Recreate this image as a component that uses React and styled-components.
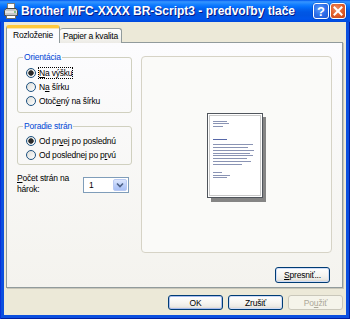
import React from 'react';
import styled, { createGlobalStyle } from 'styled-components';

const GlobalStyle = createGlobalStyle`
  html, body { margin: 0; padding: 0; background: #ECE9D8; }
  body { font-family: "Liberation Sans", Arial, sans-serif; }
  * { box-sizing: border-box; }
`;

const Window = styled.div`
  width: 350px;
  height: 319px;
  display: flex;
  flex-direction: column;
  background: #0B4FDF;
  box-shadow: inset 1px 0 #0831D9, inset -1px 0 #001EA0, inset 0 -1px #001EA0;
  overflow: hidden;
`;

const TitleBar = styled.div`
  height: 22px;
  flex: none;
  display: flex;
  align-items: center;
  padding: 0 4px 0 3px;
  background: linear-gradient(to bottom, #0058EE 0%, #3593FF 8%, #288EFF 13%, #127DFF 22%, #036FFC 32%, #0262EE 42%, #0057E5 55%, #0054E3 70%, #0055EB 86%, #0048DC 100%);
`;

const TitleIcon = styled.svg`
  width: 16px;
  height: 16px;
  flex: none;
`;

const TitleText = styled.div`
  flex: 1;
  margin-left: 2px;
  color: #fff;
  font-weight: bold;
  font-size: 12px;
  line-height: 14px;
  white-space: nowrap;
  text-shadow: 1px 1px #0A1883;
`;

const CaptionButton = styled.div`
  width: 16px;
  height: 16px;
  margin-left: 1px;
  border: 1px solid #fff;
  border-radius: 3px;
  display: flex;
  align-items: center;
  justify-content: center;
  color: #fff;
  font-weight: bold;
  font-size: 13px;
  background: ${p => p.$close
    ? 'radial-gradient(circle at 40% 35%, #F0906A 0%, #E3632F 45%, #C13D14 100%)'
    : 'radial-gradient(circle at 40% 35%, #5D9BFA 0%, #2D6FEA 50%, #1F56D2 100%)'};
  box-shadow: 0 0 0 0.5px rgba(0, 40, 140, 0.5);
`;

const Body = styled.div`
  flex: 1;
  margin: 0 4px 4px 4px;
  background: #ECE9D8;
  display: flex;
  flex-direction: column;
  padding: 3px 3px 5px 2px;
  font-size: 8.5px;
  letter-spacing: -0.2px;
  color: #000;
`;

const TabStrip = styled.div`
  display: flex;
  align-items: flex-end;
  height: 18px;
  margin-bottom: -1px;
  position: relative;
  z-index: 1;
`;

const Tab = styled.div`
  height: ${p => (p.$active ? 18 : 15)}px;
  padding: 0 ${p => (p.$active ? 6 : 3)}px;
  display: flex;
  align-items: center;
  justify-content: center;
  border: 1px solid #919B9C;
  border-bottom: none;
  border-radius: 3px 3px 0 0;
  white-space: nowrap;
  line-height: 10px;
  ${p => p.$active
    ? `
    background: #FCFCFE;
    border-top: 3px solid #FFC83C;
    box-shadow: inset 0 1px 0 #F9E6B3;
    padding-bottom: 1px;
  `
    : `
    background: linear-gradient(#FFFFFF, #F3F2ED 70%, #ECEBE6);
    border-left: none;
  `}
`;

const Panel = styled.div`
  flex: 1;
  border: 1px solid #919B9C;
  box-shadow: 1px 1px 0 #C9C7BA;
  background: linear-gradient(#FCFCFE, #F4F3EE);
  display: flex;
  gap: 9px;
  padding: 9px 9px 0 10px;
`;

const LeftCol = styled.div`
  width: 115px;
  flex: none;
  display: flex;
  flex-direction: column;
`;

const GroupBox = styled.fieldset`
  margin: ${p => p.$mt || 0}px 0 0 0;
  padding: ${p => p.$pt}px 0 ${p => p.$pb}px 0;
  border: 1px solid #D0D0BF;
  border-radius: 3px;
  min-width: 0;
`;

const Legend = styled.legend`
  color: #0046D5;
  margin-left: 5px;
  padding: 0 1px;
  line-height: 10px;
`;

const RadioRow = styled.div`
  height: 14px;
  display: flex;
  align-items: center;
  gap: 3px;
  padding-left: 8px;
  white-space: nowrap;
  line-height: 10px;
`;

const RadioDot = styled.span`
  width: 10px;
  height: 10px;
  flex: none;
  border-radius: 50%;
  border: 1px solid #1C5180;
  background: ${p => (p.$checked
    ? 'radial-gradient(circle, #2A2A2A 0 2.2px, #6A6A6A 2.6px, transparent 3px), linear-gradient(135deg, #DCDCD6, #FFFFFF)'
    : 'linear-gradient(135deg, #DCDCD6, #FFFFFF)')};
`;

const RadioLabel = styled.span`
  ${p => p.$focus && 'outline: 1px dotted #000; outline-offset: 0px;'}
`;

const CountRow = styled.div`
  margin-top: 8px;
  display: flex;
  align-items: flex-start;
`;

const CountLabel = styled.div`
  width: 66px;
  line-height: 11px;
  white-space: nowrap;
`;

const Combo = styled.div`
  width: 46px;
  height: 16px;
  margin-top: 4px;
  border: 1px solid #7F9DB9;
  background: #fff;
  display: flex;
  align-items: center;
  padding: 1px;
`;

const ComboValue = styled.span`
  flex: 1;
  padding-left: 4px;
`;

const ComboArrow = styled.span`
  width: 14px;
  height: 12px;
  border-radius: 2px;
  border: 1px solid #B9CAF3;
  background: linear-gradient(#DCE6FD, #B8CCF9 60%, #A9C0F5);
  display: flex;
  align-items: center;
  justify-content: center;
`;

const RightCol = styled.div`
  width: 191px;
  flex: none;
  display: flex;
  flex-direction: column;
  padding-top: 4px;
`;

const Preview = styled.div`
  height: 197px;
  border: 1px solid #D6D3C6;
  border-radius: 4px;
  background: #FAFAF8;
  display: flex;
  align-items: center;
  justify-content: center;
  padding-top: 7px;
`;

const Button = styled.div`
  width: 55px;
  height: ${p => p.$h || 15}px;
  border: 1px solid ${p => (p.$disabled ? '#C9C7BA' : '#003C74')};
  border-radius: 3px;
  display: flex;
  align-items: center;
  justify-content: center;
  line-height: 10px;
  white-space: nowrap;
  color: ${p => (p.$disabled ? '#ACA899' : '#000')};
  background: ${p => (p.$disabled
    ? '#F5F4EA'
    : 'linear-gradient(#FFFFFF, #F6F5F1 50%, #ECEBE6 80%, #D6D0C5)')};
  box-shadow: ${p => (p.$default
    ? 'inset 0 0 0 1px #A8BDEE'
    : p.$disabled ? 'none' : 'inset 0 0 0 1px #CFDCF7')};
`;

const SideButton = styled(Button)`
  align-self: flex-end;
  margin: 14px 2px 0 0;
`;

const ButtonRow = styled.div`
  display: flex;
  justify-content: flex-end;
  gap: 5px;
  margin-top: 7px;
`;

function PrinterIcon() {
  return (
    <TitleIcon viewBox="0 0 16 16">
      <rect x="4.5" y="0.5" width="7" height="7" fill="#fff" stroke="#7A7A7A" />
      <path d="M1.5 7.5 L3 5.5 H13 L14.5 7.5 V12.5 H1.5 Z" fill="#C8C8C8" stroke="#4A4A4A" />
      <rect x="2" y="8" width="12" height="2" fill="#E6E6E6" />
      <rect x="3.5" y="12.5" width="9" height="3" fill="#fff" stroke="#6A6A6A" />
      <rect x="11" y="8.5" width="2" height="1" fill="#2E9E2E" />
    </TitleIcon>
  );
}

function PageIcon() {
  const lines = [
    [8, 14], [10, 16], [13, 10], [26, 14], [31, 40], [34, 35], [37, 41], [40, 37],
    [42, 40], [45, 34], [48, 38], [51, 29], [59, 9], [62, 17], [64, 14],
  ];
  return (
    <svg width="60" height="90" viewBox="0 0 60 90">
      <rect x="56" y="4" width="3" height="84" fill="#858585" />
      <rect x="4" y="85" width="55" height="4" fill="#858585" />
      <rect x="0.5" y="0.5" width="55" height="84" fill="#fff" stroke="#50555C" />
      <rect x="2.5" y="2.5" width="51" height="80" fill="none" stroke="#C9C9C9" />
      {lines.map(([y, w], i) => (
        <line key={i} x1="6" x2={6 + w} y1={y + 0.5} y2={y + 0.5}
          stroke={i === 3 ? '#5668A8' : '#8A94B4'} strokeWidth="1" />
      ))}
    </svg>
  );
}

export default function App() {
  return (
    <>
      <GlobalStyle />
      <Window>
        <TitleBar>
          <PrinterIcon />
          <TitleText>Brother MFC-XXXX BR-Script3 - predvoľby tlače</TitleText>
          <CaptionButton>?</CaptionButton>
          <CaptionButton $close>
            <svg width="10" height="10" viewBox="0 0 10 10">
              <path d="M1.5 1.5 L8.5 8.5 M8.5 1.5 L1.5 8.5" stroke="#fff" strokeWidth="2" strokeLinecap="square" />
            </svg>
          </CaptionButton>
        </TitleBar>
        <Body>
          <TabStrip>
            <Tab $active>Rozloženie</Tab>
            <Tab>Papier a kvalita</Tab>
          </TabStrip>
          <Panel>
            <LeftCol>
              <GroupBox $pt={4} $pb={4}>
                <Legend>Orientácia</Legend>
                <RadioRow>
                  <RadioDot $checked />
                  <RadioLabel $focus><u>N</u>a výšku</RadioLabel>
                </RadioRow>
                <RadioRow>
                  <RadioDot />
                  <RadioLabel>N<u>a</u> šírku</RadioLabel>
                </RadioRow>
                <RadioRow>
                  <RadioDot />
                  <RadioLabel>Otoč<u>e</u>ný na šírku</RadioLabel>
                </RadioRow>
              </GroupBox>
              <GroupBox $mt={8} $pt={3} $pb={2}>
                <Legend>Poradie strán</Legend>
                <RadioRow>
                  <RadioDot $checked />
                  <RadioLabel>Od pr<u>v</u>ej po poslednú</RadioLabel>
                </RadioRow>
                <RadioRow>
                  <RadioDot />
                  <RadioLabel>Od poslednej po p<u>r</u>vú</RadioLabel>
                </RadioRow>
              </GroupBox>
              <CountRow>
                <CountLabel><u>P</u>očet strán na<br />hárok:</CountLabel>
                <Combo>
                  <ComboValue>1</ComboValue>
                  <ComboArrow>
                    <svg width="8" height="6" viewBox="0 0 8 6">
                      <path d="M1 1.5 L4 4.5 L7 1.5" fill="none" stroke="#4D6185" strokeWidth="1.6" />
                    </svg>
                  </ComboArrow>
                </Combo>
              </CountRow>
            </LeftCol>
            <RightCol>
              <Preview>
                <PageIcon />
              </Preview>
              <SideButton $h={16}><u>S</u>presniť...</SideButton>
            </RightCol>
          </Panel>
          <ButtonRow>
            <Button $default>OK</Button>
            <Button>Zrušiť</Button>
            <Button $disabled>Po<u>u</u>žiť</Button>
          </ButtonRow>
        </Body>
      </Window>
    </>
  );
}
